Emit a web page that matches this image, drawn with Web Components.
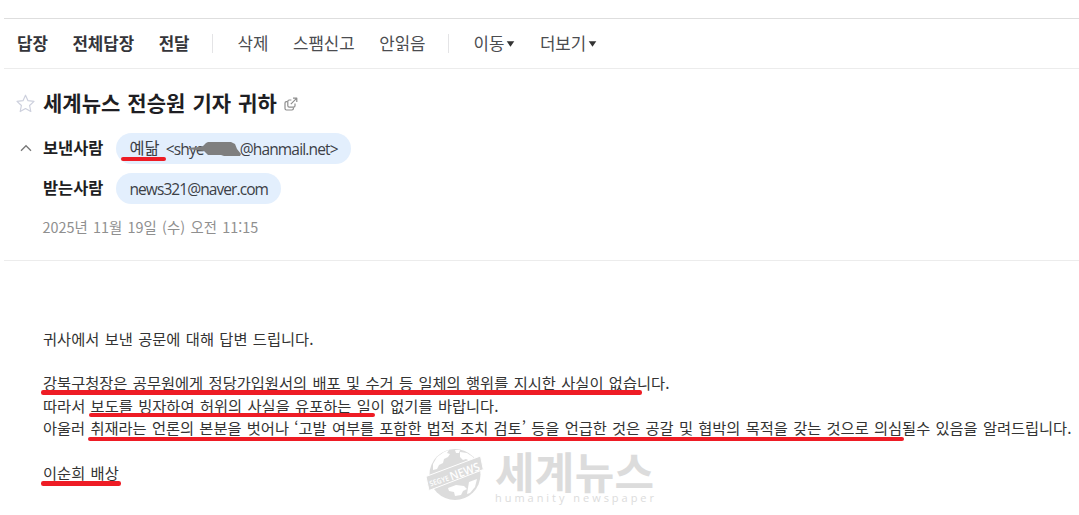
<!DOCTYPE html>
<html lang="ko">
<head>
<meta charset="utf-8">
<title>세계뉴스 전승원 기자 귀하</title>
<style>
body {
    margin: 0;
    background: #fff;
    color: #333;
    font-family: "Noto Sans CJK KR", sans-serif;
    overflow: hidden;
}
</style>
</head>
<body>
<mail-view>
    <mail-toolbar slot="toolbar">
        <tool-item strong>답장</tool-item>
        <tool-item strong>전체답장</tool-item>
        <tool-item strong>전달</tool-item>
        <tool-divider></tool-divider>
        <tool-item>삭제</tool-item>
        <tool-item>스팸신고</tool-item>
        <tool-item>안읽음</tool-item>
        <tool-divider></tool-divider>
        <tool-item menu>이동</tool-item>
        <tool-item menu>더보기</tool-item>
    </mail-toolbar>

    <mail-header slot="header">
        <span slot="subject">세계뉴스 전승원 기자 귀하</span>
        <address-chip slot="from" name="예닮" masked>&lt;shye<i></i>@hanmail.net&gt;</address-chip>
        <address-chip slot="to">news321@naver.com</address-chip>
        <span slot="date">2025년 11월 19일 (수) 오전 11:15</span>
    </mail-header>

    <mail-body>
        <mail-line>귀사에서 보낸 공문에 대해 답변 드립니다.</mail-line>
        <mail-line></mail-line>
        <mail-line><red-mark style="--over: 4.5px">강북구청장은 공무원에게 정당가입원서의 배포 및 수거 등 일체의 행위를 지시한 사실이 없습</red-mark>니다.</mail-line>
        <mail-line>따라서 <red-mark style="--over: 4px; --drop: .5px">보도를 빙자하여 허위의 사실을 유포하는 일</red-mark>이 없기를 바랍니다.</mail-line>
        <mail-line tight>아울러 <red-mark style="--drop: 2px">취재라는 언론의 본분을 벗어나 ‘고발 여부를 포함한 법적 조치 검토’ 등을 언급한 것은 공갈 및 협박의 목적을 갖는 것으로 의심</red-mark>될수 있음을 알려드립니다.</mail-line>
        <mail-line></mail-line>
        <mail-line><red-mark style="--drop: 2px">이순희 배상</red-mark></mail-line>
    </mail-body>

    <news-watermark slot="watermark"></news-watermark>
</mail-view>

<script>
function define(name, html, setup){
    const template = document.createElement("template");
    template.innerHTML = html;

    customElements.define(name, class extends HTMLElement {
        constructor(){
            super();
            this.attachShadow({mode: "open"});
            this.shadowRoot.appendChild(template.content.cloneNode(true));
        }

        connectedCallback(){
            if(setup) setup(this, this.shadowRoot);
        }
    });
}

define("mail-view", `
<style>
:host { display: block; position: relative; height: 515px; padding: 18px 0 0 4px; box-sizing: border-box; }
</style>
<slot name="toolbar"></slot>
<slot name="header"></slot>
<slot></slot>
<slot name="watermark"></slot>
`);

define("mail-toolbar", `
<style>
:host {
    display: flex;
    align-items: center;
    gap: 24.5px;
    height: 51px;
    box-sizing: border-box;
    padding: 0 0 2px 13px;
    border-top: 1px solid #dedede;
    border-bottom: 1px solid #ececec;
}
</style>
<slot></slot>
`);

define("tool-item", `
<style>
:host {
    display: flex;
    align-items: center;
    font-size: 16.8px;
    line-height: 24px;
    color: #4b4c50;
    white-space: nowrap;
}
:host([strong]) { font-weight: 700; color: #35353a; }
svg { display: none; margin: 2px 0 0 2px; }
:host([menu]) svg { display: block; }
</style>
<slot></slot>
<svg width="9" height="6" viewBox="0 0 9 6"><path d="M.7.3h7.6L4.5 5.8z" fill="#333"/></svg>
`);

define("tool-divider", `
<style>
:host { display: block; width: 1px; height: 19px; margin: 2px 0 0 -2px; background: #e4e4e6; }
</style>
`);

define("mail-header", `
<style>
:host {
    display: block;
    height: 192px;
    box-sizing: border-box;
    padding: 17px 0 0 12px;
    border-bottom: 1px solid #ececec;
}
.subject { display: flex; align-items: center; height: 34px; }
.subject .star { margin-right: 8px; }
.subject .popup { margin: 2px 0 0 7px; }
.title {
    font-size: 21px;
    font-weight: 700;
    line-height: 34px;
    color: #1e1e23;
    white-space: nowrap;
    word-spacing: 1.2px;
    margin-top: -2px;
}
.row {
    display: grid;
    grid-template-columns: 27px 73px auto;
    justify-content: start;
    align-items: center;
    height: 32px;
    margin-top: 12px;
}
.row + .row { margin-top: 8px; }
.row svg { margin-left: 4px; }
.label { grid-column: 2; font-size: 16.4px; font-weight: 700; line-height: 24px; color: #1e1e23; margin-top: -2px; }
.date {
    padding: 11px 0 0 26.5px;
    font-size: 14.4px;
    line-height: 24px;
    color: #8f8f8f;
    white-space: nowrap;
    word-spacing: 1.3px;
}
</style>
<div class="subject">
    <svg class="star" width="19" height="19" viewBox="0 0 19 19" fill="none" stroke="#cdd0dd" stroke-width="1.2" stroke-linejoin="round">
        <path d="M9.5 1.2l2.5 5.5 6 .7-4.4 4.1 1.2 6-5.3-3-5.3 3 1.2-6L1 7.4l6-.7z"/>
    </svg>
    <div class="title"><slot name="subject"></slot></div>
    <svg class="popup" width="14" height="14" viewBox="0 0 14 14" fill="none" stroke="#8e8e8e" stroke-width="1.2" stroke-linejoin="round">
        <path d="M3.6 4.6H2.4Q1 4.6 1 6v5.6Q1 13 2.4 13H8q1.400 0 1.400-1.400v-1"/>
        <path d="M7.4 3H5.2Q3.8 3 3.8 4.4V8.8q0 1.400 1.400 1.400H9.6q1.400 0 1.400-1.400V6.6"/>
        <path d="M9 1.2h3.8V5M12.6 1.4L6.8 7.2"/>
    </svg>
</div>
<div class="row">
    <svg width="12" height="8" viewBox="0 0 12 8" fill="none" stroke="#777" stroke-width="1.3"><path d="M1 6.8L6 1.7l5 5.1"/></svg>
    <span class="label">보낸사람</span>
    <slot name="from"></slot>
</div>
<div class="row">
    <span class="label">받는사람</span>
    <slot name="to"></slot>
</div>
<div class="date"><slot name="date"></slot></div>
`);

define("address-chip", `
<style>
:host {
    display: flex;
    align-items: center;
    position: relative;
    height: 31px;
    padding: 0 13px 0 13.5px;
    border-radius: 16px;
    background: #e3effd;
    color: #3c4046;
    font-family: "Open Sans", "Noto Sans CJK KR", sans-serif;
    font-size: 15.5px;
    letter-spacing: -0.92px;
    line-height: 24px;
    white-space: nowrap;
}
.name { margin-right: 6px; font: 16.4px/24px "Noto Sans CJK KR", sans-serif; letter-spacing: 0; margin-top: -2px; }
.name:empty { display: none; }
.address { margin-top: 2px; }
.line { display: none; position: absolute; left: 5px; top: 24px; width: 45px; height: 4.5px; border-radius: 2px; background: #ee1c25; }
.mask { display: none; position: absolute; left: 72px; top: 8px; }
:host([masked]) .line, :host([masked]) .mask { display: block; }
:host([masked]) { letter-spacing: -0.84px; }
::slotted(i) { display: inline-block; width: 36px; }
</style>
<span class="name"></span>
<span class="address"><slot></slot></span>
<span class="line"></span>
<svg class="mask" width="54" height="16" viewBox="0 0 54 16" fill="#7f7f7f">
    <path d="M0 7l11-1 4-1 3-3 2-1h23l4 2 2 5 4 5-1 2H36l-3-1H20l-4-4-8-1-8-1z"/>
</svg>
`, (host, root) => {
    root.querySelector(".name").textContent = host.getAttribute("name") || "";
});

define("mail-body", `
<style>
:host { display: block; padding: 65.5px 0 0 39px; font-size: 15.3px; color: #333; }
</style>
<slot></slot>
`);

define("mail-line", `
<style>
:host { display: block; height: 22.35px; line-height: 22.35px; white-space: nowrap; word-spacing: 1.1px; }
:host([tight]) { letter-spacing: -0.04px; }
</style>
<slot></slot>
`);

//hand drawn underline, runs slightly past the words
define("red-mark", `
<style>
:host { display: inline-block; position: relative; }
span {
    position: absolute;
    left: -2px;
    right: calc(0px - var(--over, 2px));
    bottom: calc(-1px - var(--drop, 0px));
    height: 4.5px;
    border-radius: 2.2px;
    background: #ee1c25;
}
</style>
<slot></slot><span></span>
`);

define("news-watermark", `
<style>
:host { display: block; position: absolute; left: 424px; top: 446px; }
svg { display: block; overflow: visible; }
</style>
<svg width="240" height="66" viewBox="0 0 240 66" fill="#dcdcdc">
    <circle cx="31" cy="28.5" r="25.5"/>
    <g fill="#fff">
        <path d="M9 18l4-7 7-5 5-2-2 3 3 1-2 3-4 2-1 4-4 2-2 4-4 1z"/>
        <path d="M31 4l5 0-1 3-3 0zM36 6l7 1 6 4 2 4-5 0-4-2-3 1-3-3z"/>
        <path d="M24 42l8-3 8 1 3 3-4 2-2 4-6 1-1-4-5-1z"/>
        <path d="M45 36l8-3-2 8-5 6-3 1z"/>
    </g>
    <path d="M2 30.500L56.500 10 59.300 23.500 5 44.500z" stroke="#fff" stroke-width="1"/>
    <g fill="#fff" font-family="Open Sans, sans-serif" font-weight="600">
        <text transform="translate(6.5 40.5) rotate(-18)" font-size="7.5" textLength="20" lengthAdjust="spacingAndGlyphs">SEGYE</text>
        <text transform="translate(27.5 34.5) rotate(-20)" font-size="11.5" textLength="31" lengthAdjust="spacingAndGlyphs">NEWS</text>
    </g>
    <text x="71" y="43" font-family="Noto Sans CJK KR, sans-serif" font-weight="700" font-size="43" textLength="159">세계뉴스</text>
    <text x="71" y="56" font-family="Open Sans, sans-serif" font-size="11" textLength="159">humanity newspaper</text>
</svg>
`);
</script>
</body>
</html>
